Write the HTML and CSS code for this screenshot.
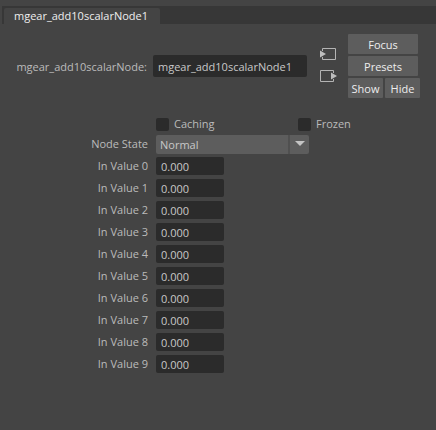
FILE: index.html
```html
<!DOCTYPE html>
<html lang="en">
<head>
<meta charset="utf-8">
<title>Attribute Editor</title>
<link rel="stylesheet" href="styles.css">
</head>
<body>
<nav class="tabs"><button class="tab" type="button">mgear_add10scalarNode1</button></nav>
<main>
  <header class="node">
    <label class="node-label" for="node-name">mgear_add10scalarNode:</label>
    <input class="field name" id="node-name" type="text" value="mgear_add10scalarNode1">
    <div class="links">
      <button class="icon" type="button" aria-label="Input connection">
        <svg width="18" height="14" viewBox="0 0 18 14"><path d="M2.500 4V1.500H15.500V12.500H2.500V10" fill="none" stroke="#b4b4b4"/><path d="M0 3.500L6 7L0 10.500Z" fill="#bdbdbd"/></svg>
      </button>
      <button class="icon" type="button" aria-label="Output connection">
        <svg width="18" height="14" viewBox="0 0 18 14"><path d="M13.500 4V1.500H0.500V12.500H13.500V10" fill="none" stroke="#b4b4b4"/><path d="M11 3.500L17 7L11 10.500Z" fill="#bdbdbd"/></svg>
      </button>
    </div>
    <div class="actions">
      <button class="btn wide" type="button">Focus</button>
      <button class="btn wide" type="button">Presets</button>
      <div class="pair">
        <button class="btn" type="button">Show</button>
        <button class="btn" type="button">Hide</button>
      </div>
    </div>
  </header>
  <form class="attributes">
    <div class="checks">
      <label class="check"><input type="checkbox">Caching</label>
      <label class="check"><input type="checkbox">Frozen</label>
    </div>
    <div class="row state">
      <label for="state">Node State</label>
      <div class="select">
        <select id="state"><option>Normal</option></select>
        <span class="arrow"><svg width="10" height="6" viewBox="0 0 10 6"><path d="M0 0H10L5 5Z" fill="#c4c4c4"/></svg></span>
      </div>
    </div>
    <div class="row"><label for="v0">In Value 0</label><input class="field" id="v0" type="text" value="0.000"></div>
    <div class="row"><label for="v1">In Value 1</label><input class="field" id="v1" type="text" value="0.000"></div>
    <div class="row"><label for="v2">In Value 2</label><input class="field" id="v2" type="text" value="0.000"></div>
    <div class="row"><label for="v3">In Value 3</label><input class="field" id="v3" type="text" value="0.000"></div>
    <div class="row"><label for="v4">In Value 4</label><input class="field" id="v4" type="text" value="0.000"></div>
    <div class="row"><label for="v5">In Value 5</label><input class="field" id="v5" type="text" value="0.000"></div>
    <div class="row"><label for="v6">In Value 6</label><input class="field" id="v6" type="text" value="0.000"></div>
    <div class="row"><label for="v7">In Value 7</label><input class="field" id="v7" type="text" value="0.000"></div>
    <div class="row"><label for="v8">In Value 8</label><input class="field" id="v8" type="text" value="0.000"></div>
    <div class="row"><label for="v9">In Value 9</label><input class="field" id="v9" type="text" value="0.000"></div>
  </form>
</main>
</body>
</html>
```
FILE: styles.css
```css
* { box-sizing: border-box; }
body {
  margin: 0;
  padding-top: 6px;
  background: #444;
  color: #bbb;
  font: 11px/16px "Open Sans", "Noto Sans", sans-serif;
}
button, input, select { margin: 0; border: 0; font: inherit; color: inherit; }
.tabs { display: flex; margin-left: 2px; padding: 2px 2px 0; background: #373737; }
.tab {
  height: 16px;
  padding: 0 12px 0 10px;
  border-radius: 2px 2px 0 0;
  background: #444;
  color: #eee;
}
.node { display: flex; align-items: flex-start; padding-top: 10px; }
.node-label { width: 147px; margin-top: 25px; text-align: right; }
.field {
  width: 68px;
  height: 18px;
  padding: 1px 5px 0;
  border-radius: 2px;
  background: #2b2b2b;
  color: #c8c8c8;
}
.name { width: 154px; height: 22px; margin: 21px 13px 0 6px; }
.links { display: flex; flex-direction: column; gap: 8px; margin: 13px 10px 0 0; }
.icon { display: block; padding: 0; background: none; }
.icon svg { display: block; }
.actions { display: flex; flex-direction: column; gap: 2px; }
.btn {
  width: 35px;
  height: 20px;
  padding: 2px 0 0;
  border-radius: 1px;
  background: #5d5d5d;
  color: #eee;
}
.wide { width: 70px; }
.pair { display: flex; gap: 2px; }
.checks {
  display: grid;
  grid-template-columns: 142px auto;
  margin: 18px 0 0 156px;
}
.check { display: flex; align-items: center; gap: 5px; height: 16px; }
.check input { appearance: none; width: 13px; height: 13px; border-radius: 2px; background: #2b2b2b; }
.row { display: flex; gap: 8px; height: 18px; margin-bottom: 4px; align-items: center; }
.row label { width: 148px; text-align: right; }
.state { height: 20px; margin: 2px 0 3px; }
.select { position: relative; width: 153px; height: 19px; }
select {
  appearance: none;
  width: 100%;
  height: 100%;
  padding: 2px 24px 0 4px;
  border-radius: 2px;
  background: #5d5d5d;
  color: #c8c8c8;
}
.arrow {
  position: absolute;
  inset: 0 0 0 auto;
  display: flex;
  align-items: center;
  justify-content: center;
  width: 21px;
  border-left: 2px solid #505050;
  pointer-events: none;
}
```
